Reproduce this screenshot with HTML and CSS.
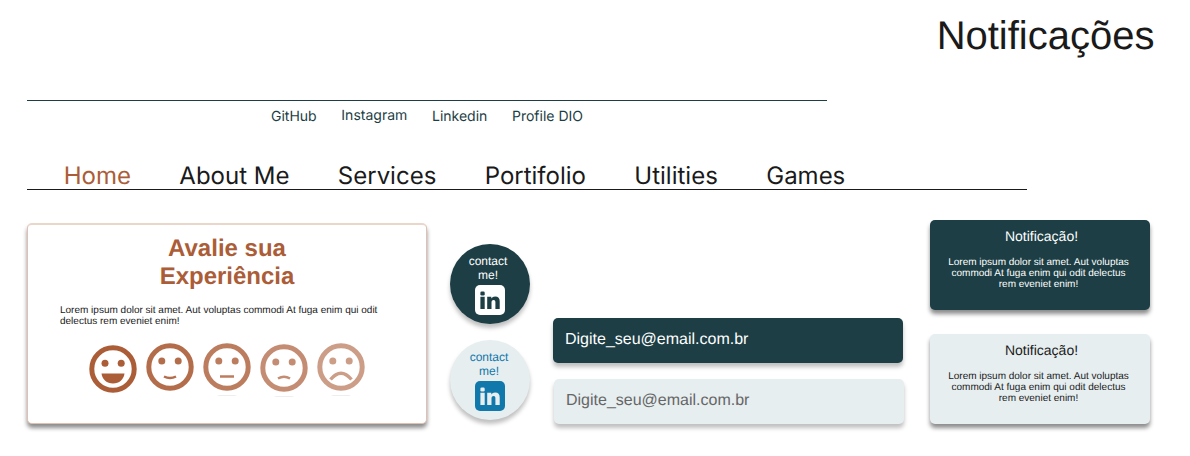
FILE: index.html
```html
<!DOCTYPE html>
<html lang="pt-BR">
<head>
<meta charset="utf-8">
<title>Notificações</title>
<link rel="stylesheet" href="styles.css">
</head>
<body>
<header class="header">
  <h1 class="title">Notificações</h1>
</header>
<nav class="social">
  <a class="social-link">GitHub</a>
  <a class="social-link raised">Instagram</a>
  <a class="social-link">Linkedin</a>
  <a class="social-link">Profile DIO</a>
</nav>
<nav class="menu">
  <a class="menu-link active">Home</a>
  <a class="menu-link">About Me</a>
  <a class="menu-link">Services</a>
  <a class="menu-link">Portifolio</a>
  <a class="menu-link">Utilities</a>
  <a class="menu-link">Games</a>
</nav>
<main class="content">
  <section class="rating">
    <h2 class="rating-title">Avalie sua<br>Experiência</h2>
    <p class="rating-text">Lorem ipsum dolor sit amet. Aut voluptas commodi At fuga enim qui odit<br>delectus rem eveniet enim!</p>
    <div class="faces">
      <svg class="face low2" viewBox="0 0 48 54"><circle class="ring" cx="24" cy="24" r="21.2"/><circle cx="16" cy="18.2" r="3.5"/><circle cx="32.2" cy="18.2" r="3.5"/><path d="M12.500 28.500h23c-.7 6-5.300 10-11.500 10s-10.800-4-11.500-10z"/></svg>
      <svg class="face f2" viewBox="0 0 48 54"><circle class="ring" cx="24" cy="24" r="21.2"/><circle cx="15.800" cy="18" r="3.500"/><circle cx="32.200" cy="18" r="3.500"/><path class="mouth" d="M18 33.500q6 3.200 12 0"/></svg>
      <svg class="face f3" viewBox="0 0 48 54"><circle class="ring" cx="24" cy="24" r="21.2"/><circle cx="15.800" cy="18" r="3.500"/><circle cx="32.200" cy="18" r="3.500"/><path class="mouth" d="M17 33.500h14"/><ellipse class="shade" cx="24" cy="52.500" rx="10" ry=".6"/></svg>
      <svg class="face f4 low1" viewBox="0 0 48 54"><circle class="ring" cx="24" cy="24" r="21.2"/><circle cx="15.800" cy="18" r="3.500"/><circle cx="32.200" cy="18" r="3.500"/><path class="mouth" d="M18 34.500q6-3.600 12 0"/><ellipse class="shade" cx="24" cy="52.500" rx="10" ry=".6"/></svg>
      <svg class="face f5" viewBox="0 0 48 54"><circle class="ring" cx="24" cy="24" r="21.2"/><circle cx="15.800" cy="18" r="3.500"/><circle cx="32.200" cy="18" r="3.500"/><path class="mouth wide" d="M13.500 36.500q10.500-12.500 21 0"/><ellipse class="shade" cx="24" cy="52.500" rx="10" ry=".6"/></svg>
    </div>
  </section>
  <div class="contacts">
    <a class="contact dark">contact<br>me!
      <svg class="logo" viewBox="0 0 30 30"><rect class="tile" width="30" height="30" rx="5"/><rect class="letter" x="5.400" y="6.500" width="4.300" height="4" rx="1.300"/><path class="letter" d="M5.400 11.800h4.300V24H5.400zM12.200 11.800h4.100v1.700c.9-1.300 2.100-2 3.800-2 3.200 0 4.600 1.900 4.600 4.700V24h-4.300v-6.700c0-1.500-.6-2.300-1.900-2.300-1.300 0-2 1-2 2.500V24h-4.300z"/></svg>
    </a>
    <a class="contact light">contact<br>me!
      <svg class="logo" viewBox="0 0 30 30"><rect class="tile" width="30" height="30" rx="5"/><rect class="letter" x="5.400" y="6.500" width="4.300" height="4" rx="1.300"/><path class="letter" d="M5.400 11.800h4.300V24H5.400zM12.200 11.800h4.100v1.700c.9-1.300 2.100-2 3.800-2 3.200 0 4.600 1.900 4.600 4.700V24h-4.300v-6.700c0-1.500-.6-2.300-1.900-2.300-1.300 0-2 1-2 2.500V24h-4.300z"/></svg>
    </a>
  </div>
  <div class="fields">
    <div class="field dark">Digite_seu@email.com.br</div>
    <div class="field light">Digite_seu@email.com.br</div>
  </div>
  <div class="notices">
    <article class="notice dark">
      <h3 class="notice-title">Notificação!</h3>
      <p class="notice-text">Lorem ipsum dolor sit amet. Aut voluptas<br>commodi At fuga enim qui odit delectus<br>rem eveniet enim!</p>
    </article>
    <article class="notice light">
      <h3 class="notice-title">Notificação!</h3>
      <p class="notice-text">Lorem ipsum dolor sit amet. Aut voluptas<br>commodi At fuga enim qui odit delectus<br>rem eveniet enim!</p>
    </article>
  </div>
</main>
</body>
</html>
```
FILE: styles.css
```css
* { box-sizing: border-box; }
body {
  margin: 0;
  height: 456px;
  overflow: hidden;
  background: #fff;
  color: #1a1a1a;
  font-family: "Liberation Sans", Arial, sans-serif;
  text-rendering: geometricPrecision;
}
h1, h2, h3, p { margin: 0; font-weight: 400; }
.header { height: 100px; padding: 13px 35.5px 0 0; text-align: right; }
.title { font-size: 40px; line-height: 46px; }
.social {
  display: flex;
  gap: 24.7px;
  width: 800px;
  height: 50px;
  margin-left: 27px;
  padding: 7px 0 0 244px;
  border-top: 1px solid #1c3e44;
  color: #1c3e44;
  font: 14px/17px Inter, sans-serif;
}
.raised { margin-top: -1px; }
.menu {
  display: flex;
  gap: 48.4px;
  width: 1000px;
  height: 40px;
  margin-left: 27px;
  padding: 11px 0 0 36.7px;
  border-bottom: 1px solid #1a1a1a;
  font: 24px/29px Inter, sans-serif;
}
.menu-link.active { color: #ab5d38; }
.content {
  display: flex;
  align-items: flex-start;
  padding: 30px 40px 0 27px;
}
.rating {
  width: 400px;
  height: 201px;
  margin-top: 3px;
  padding-top: 10px;
  border: 1px solid #dfc0b1;
  border-top: 2px solid #ead6cb;
  border-radius: 5px;
  background: #fff;
  box-shadow: 0 4px 4px rgba(0, 0, 0, .45);
}
.rating-title {
  color: #ab5d38;
  font-size: 24px;
  font-weight: 700;
  line-height: 28px;
  text-align: center;
}
.rating-text { padding: 14px 0 0 32px; font-size: 10px; line-height: 11px; }
.faces { display: flex; gap: 9px; padding: 16px 0 0 61px; fill: #ab5d38; }
.face { width: 48px; height: 54px; }
.low1 { margin-top: 1px; }
.low2 { margin-top: 2px; }
.f2 { fill: #b46d4b; }
.f3 { fill: #bc7d5f; }
.f4 { fill: #c48d73; }
.f5 { fill: #cc9d87; }
.ring, .mouth { fill: none; stroke: #ab5d38; stroke-width: 5; }
.mouth { stroke-width: 2.5; }
.wide { stroke-width: 3.4; }
.f2 .ring, .f2 .mouth { stroke: #b46d4b; }
.f3 .ring, .f3 .mouth { stroke: #bc7d5f; }
.f4 .ring, .f4 .mouth { stroke: #c48d73; }
.f5 .ring, .f5 .mouth { stroke: #cc9d87; }
.shade { fill: #eee; }
.contacts { display: grid; gap: 16px; margin: 24px 0 0 23px; }
.contact {
  display: flow-root;
  width: 80px;
  height: 80px;
  padding: 10px 4px 0 0;
  border-radius: 50%;
  box-shadow: 0 4px 4px rgba(0, 0, 0, .25);
  font-size: 12px;
  line-height: 14px;
  text-align: center;
}
.dark { background: #1c3e44; color: #fff; }
.light { background: #e6eef0; }
.contact.light { padding-right: 2px; color: #1178ac; }
.logo { display: block; width: 30px; height: 30px; margin: 3px 0 0 25px; }
.tile { fill: #fff; }
.letter { fill: #1c3e44; }
.light .tile { fill: #1178ac; }
.light .letter { fill: #e6eef0; }
.fields { display: grid; gap: 16px; margin: 98px 0 0 23px; }
.field {
  width: 350px;
  height: 45px;
  padding: 13px 12px 12px;
  border-radius: 5px;
  box-shadow: 0 4px 4px rgba(0, 0, 0, .25);
  font-size: 16px;
  line-height: 18px;
}
.field.light { margin-left: 1px; color: #666; }
.notices { display: grid; gap: 24px; margin-left: 26px; }
.notice {
  width: 220px;
  height: 90px;
  padding: 8px 3px 0 0;
  border-radius: 5px;
  box-shadow: 0 4px 4px rgba(0, 0, 0, .45);
  text-align: center;
}
.notice-title { padding-left: 6px; font-size: 14px; line-height: 16px; }
.notice-text { padding-top: 13px; font-size: 10px; line-height: 11px; }
```
